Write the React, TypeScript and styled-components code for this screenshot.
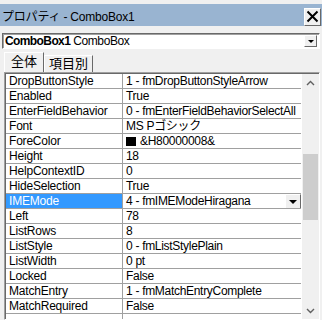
import React from "react";
import styled, { createGlobalStyle } from "styled-components";

const GlobalStyle = createGlobalStyle`
  html, body {
    margin: 0;
    padding: 0;
    background: #f0f0f0;
  }
  body {
    font-family: "Liberation Sans", "Noto Sans CJK JP", sans-serif;
    font-size: 12px;
    color: #000;
  }
`;

interface Prop {
  name: string;
  value: string;
  swatch?: boolean;
  selected?: boolean;
}

const props: Prop[] = [
  { name: "DropButtonStyle", value: "1 - fmDropButtonStyleArrow" },
  { name: "Enabled", value: "True" },
  { name: "EnterFieldBehavior", value: "0 - fmEnterFieldBehaviorSelectAll" },
  { name: "Font", value: "MS Pゴシック" },
  { name: "ForeColor", value: "&H80000008&", swatch: true },
  { name: "Height", value: "18" },
  { name: "HelpContextID", value: "0" },
  { name: "HideSelection", value: "True" },
  { name: "IMEMode", value: "4 - fmIMEModeHiragana", selected: true },
  { name: "Left", value: "78" },
  { name: "ListRows", value: "8" },
  { name: "ListStyle", value: "0 - fmListStylePlain" },
  { name: "ListWidth", value: "0 pt" },
  { name: "Locked", value: "False" },
  { name: "MatchEntry", value: "1 - fmMatchEntryComplete" },
  { name: "MatchRequired", value: "False" },
  { name: "", value: "" },
];

export default function App() {
  return (
    <Window>
      <GlobalStyle />
      <TitleBar>
        <Title>プロパティ - ComboBox1</Title>
        <CloseButton>
          <svg width="13" height="13" viewBox="0 0 13 13">
            <path d="M1.5 1.5 L11.5 11.5 M11.5 1.5 L1.5 11.5" stroke="#000" strokeWidth="2" />
          </svg>
        </CloseButton>
      </TitleBar>

      <ObjectBox>
        <ObjectText>
          <b>ComboBox1</b> ComboBox
        </ObjectText>
        <DropButton>
          <Arrow $size={3} />
        </DropButton>
      </ObjectBox>

      <TabRow>
        <Tab $active>全体</Tab>
        <Tab>項目別</Tab>
      </TabRow>

      <Grid>
        <Rows>
          {props.map((p, i) => (
            <Row key={i}>
              <NameCell $selected={p.selected}>{p.name}</NameCell>
              <ValueCell>
                <ValueText>
                  {p.swatch && <Swatch />}
                  {p.value}
                </ValueText>
                {p.selected && (
                  <CellButton>
                    <Arrow $size={4} />
                  </CellButton>
                )}
              </ValueCell>
            </Row>
          ))}
        </Rows>
        <ScrollBar>
          <ScrollButton>
            <svg width="9" height="6" viewBox="0 0 9 6">
              <path d="M1 5 L4.5 1.5 L8 5" fill="none" stroke="#606060" strokeWidth="1.4" />
            </svg>
          </ScrollButton>
          <Track>
            <Thumb />
          </Track>
          <ScrollButton>
            <svg width="9" height="6" viewBox="0 0 9 6">
              <path d="M1 1 L4.5 4.5 L8 1" fill="none" stroke="#606060" strokeWidth="1.4" />
            </svg>
          </ScrollButton>
        </ScrollBar>
      </Grid>
    </Window>
  );
}

const Window = styled.div`
  width: 322px;
  height: 320px;
  display: flex;
  flex-direction: column;
  overflow: hidden;
`;

const TitleBar = styled.div`
  margin-top: 4px;
  height: 22px;
  background: #99b4d1;
  display: flex;
  align-items: center;
  justify-content: space-between;
  padding-left: 2px;
`;

const Title = styled.span`
  font-size: 12px;
  letter-spacing: -0.2px;
`;

const CloseButton = styled.div`
  width: 15px;
  height: 16px;
  margin-right: 1px;
  margin-top: 3px;
  background: #f0f0f0;
  border: 1px solid;
  border-color: #fff #696969 #696969 #fff;
  display: flex;
  align-items: center;
  justify-content: center;
`;

const ObjectBox = styled.div`
  margin: 7px 2px 0 2px;
  height: 14px;
  background: #fff;
  border: 1px solid;
  border-color: #696969 #fff #fff #696969;
  box-shadow: inset 1px 1px 0 #a0a0a0;
  display: flex;
  align-items: center;
  justify-content: space-between;
`;

const ObjectText = styled.span`
  padding-left: 2px;
  font-size: 12px;
  line-height: 14px;
  letter-spacing: -0.4px;
  b {
    font-weight: bold;
    letter-spacing: -0.6px;
  }
`;

const DropButton = styled.div`
  width: 11px;
  height: 10px;
  margin-right: 2px;
  background: #f0f0f0;
  border: 1px solid;
  border-color: #fff #696969 #696969 #fff;
  display: flex;
  align-items: center;
  justify-content: center;
`;

const Arrow = styled.span<{ $size: number }>`
  width: 0;
  height: 0;
  border-left: ${(p) => p.$size}px solid transparent;
  border-right: ${(p) => p.$size}px solid transparent;
  border-top: ${(p) => p.$size}px solid #000;
`;

const TabRow = styled.div`
  display: flex;
  align-items: flex-end;
  margin: 3px 0 0 4px;
  height: 20px;
`;

const Tab = styled.div<{ $active?: boolean }>`
  height: ${(p) => (p.$active ? 20 : 17)}px;
  padding: 0 ${(p) => (p.$active ? 6 : 4)}px;
  font-size: 13px;
  line-height: ${(p) => (p.$active ? 18 : 16)}px;
  background: #f0f0f0;
  border: 1px solid;
  border-bottom: none;
  border-color: #fff #696969 #fff #fff;
  box-sizing: border-box;
`;

const Grid = styled.div`
  flex: 1;
  margin: 0 2px 0 4px;
  border: 1px solid;
  border-color: #a0a0a0 #fff #fff #a0a0a0;
  box-shadow: inset 1px 1px 0 #696969;
  padding: 1px 0 0 1px;
  display: flex;
  overflow: hidden;
`;

const Rows = styled.div`
  flex: 1;
  background: #fff;
  letter-spacing: -0.2px;
`;

const Row = styled.div`
  display: grid;
  grid-template-columns: 117px 1fr;
  height: 15px;
`;

const NameCell = styled.div<{ $selected?: boolean }>`
  padding-left: 3px;
  line-height: 14px;
  border-right: 1px solid #a0a0a0;
  border-bottom: 1px solid #a0a0a0;
  background: ${(p) => (p.$selected ? "#3399ff" : "#fff")};
  color: ${(p) => (p.$selected ? "#fff" : "#000")};
  white-space: nowrap;
  overflow: hidden;
`;

const ValueCell = styled.div`
  margin-right: 1px;
  padding-left: 3px;
  border-bottom: 1px solid #a0a0a0;
  display: flex;
  justify-content: space-between;
  overflow: hidden;
`;

const ValueText = styled.span`
  line-height: 14px;
  white-space: nowrap;
  display: flex;
  align-items: center;
  letter-spacing: -0.3px;
`;

const Swatch = styled.span`
  width: 10px;
  height: 9px;
  background: #000;
  margin-right: 4px;
`;

const CellButton = styled.div`
  width: 14px;
  height: 13px;
  flex-shrink: 0;
  background: #f0f0f0;
  border: 1px solid;
  border-color: #fff #696969 #696969 #fff;
  display: flex;
  align-items: center;
  justify-content: center;
`;

const ScrollBar = styled.div`
  width: 17px;
  background: #f0f0f0;
  display: flex;
  flex-direction: column;
`;

const ScrollButton = styled.div`
  height: 17px;
  display: flex;
  align-items: center;
  justify-content: center;
`;

const Track = styled.div`
  flex: 1;
  display: flex;
  flex-direction: column;
  align-items: center;
`;

const Thumb = styled.div`
  width: 15px;
  height: 66px;
  margin-top: 63px;
  background: #cdcdcd;
`;
